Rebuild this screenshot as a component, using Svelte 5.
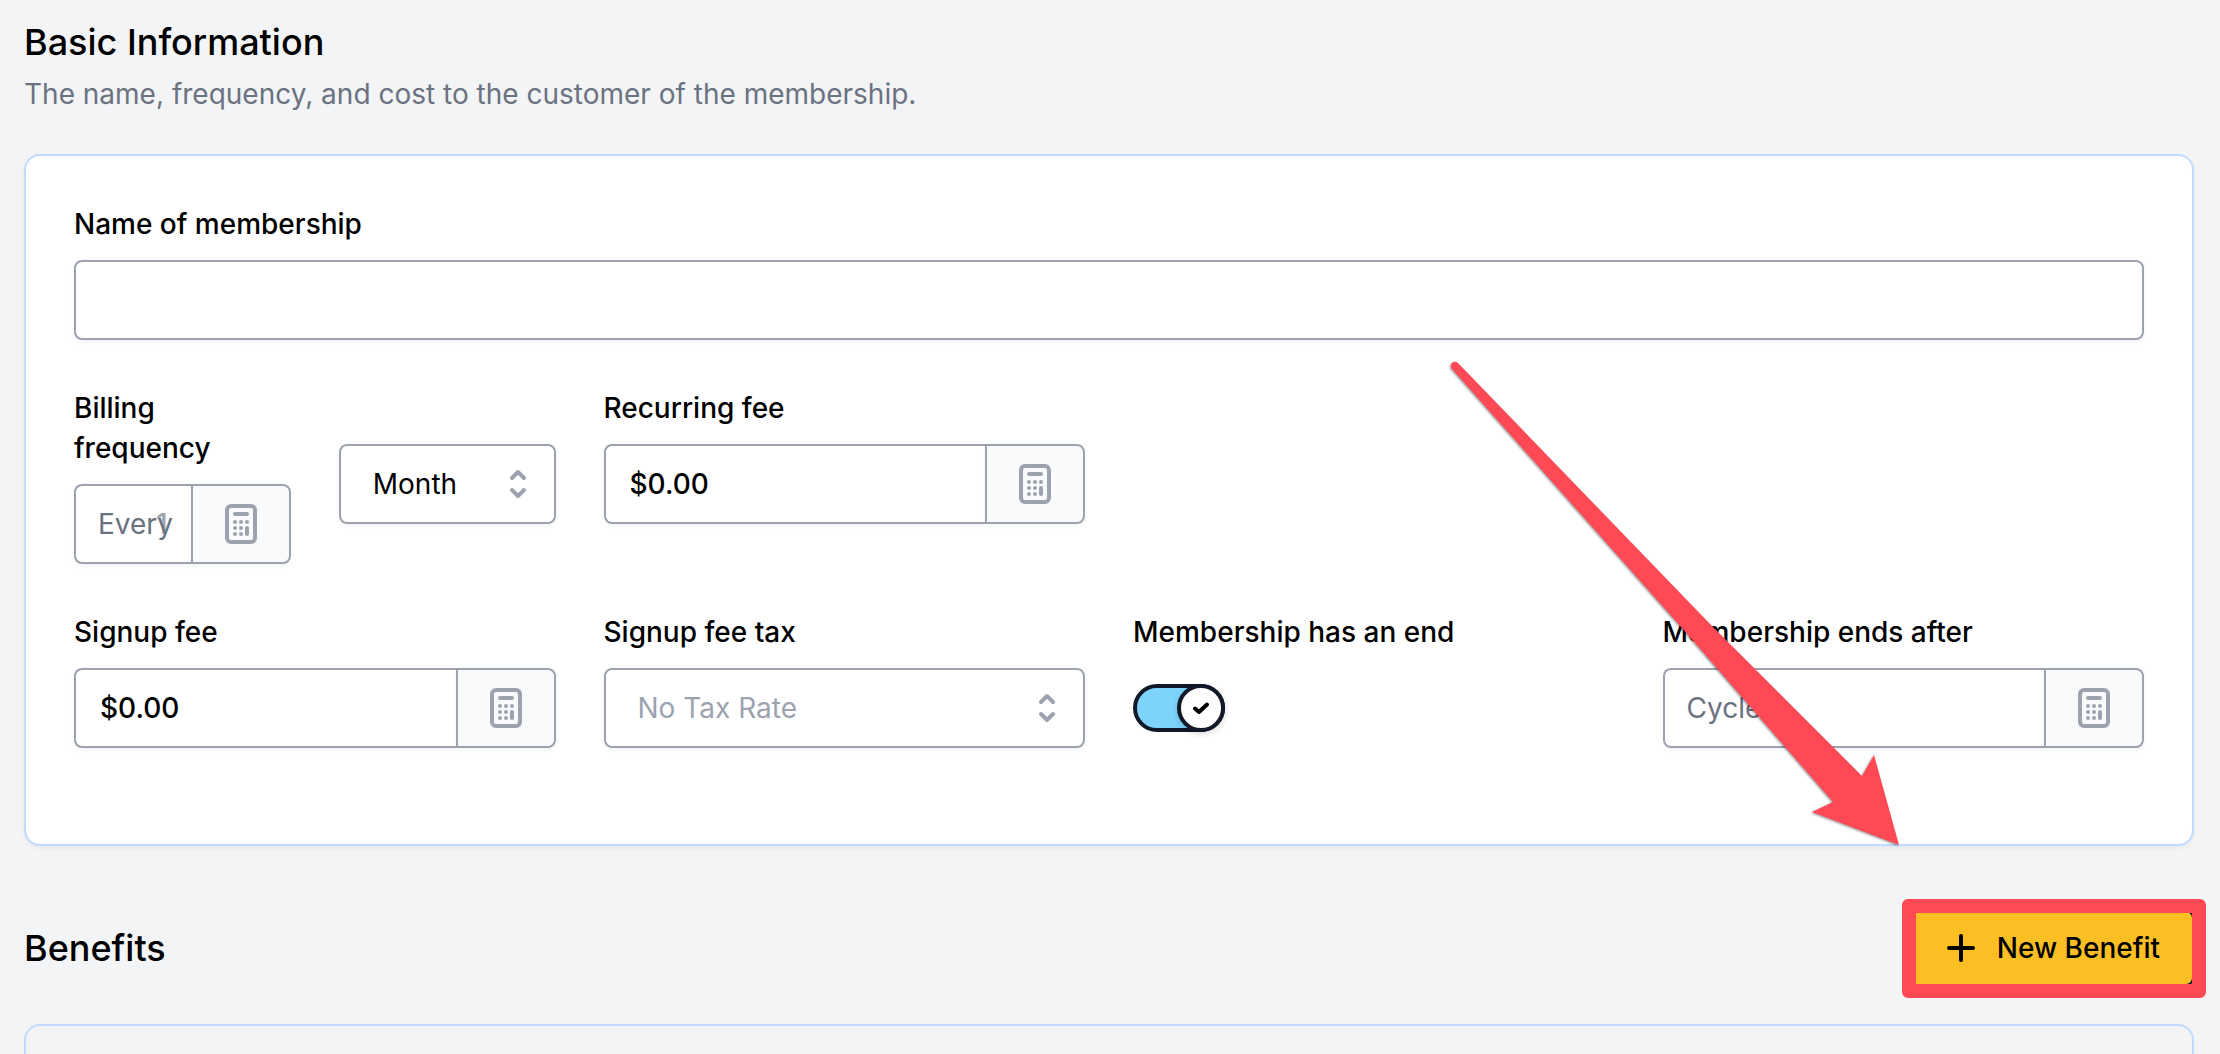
<script lang="ts">
	let name = $state('');
	let every = $state('1');
	let period = $state('Month');
	let recurringFee = $state('$0.00');
	let signupFee = $state('$0.00');
	let taxRate = $state('');
	let hasEnd = $state(true);
	let cycles = $state('');
</script>

{#snippet calculator(label: string)}
	<button class="addon" type="button" aria-label={label}>
		<svg width="32" height="40" viewBox="0 0 32 40" fill="none">
			<rect x="2" y="2" width="28" height="36" rx="4" stroke="currentColor" stroke-width="4" />
			<path d="M10 10H22" stroke="currentColor" stroke-width="4" stroke-linecap="round" />
			<g fill="currentColor">
				{#each [18, 24, 30] as y}
					<circle cx="10" cy={y} r="2" />
					<circle cx="16" cy={y} r="2" />
				{/each}
				<circle cx="22" cy="18" r="2" />
				<rect x="20" y="22" width="4" height="10" rx="2" />
			</g>
		</svg>
	</button>
{/snippet}

{#snippet chevrons()}
	<svg class="select__icon" width="20" height="32" viewBox="0 0 20 32" fill="none" stroke="currentColor" stroke-width="4" stroke-linecap="round" stroke-linejoin="round">
		<path d="M4 10L10 4L16 10M4 22L10 28L16 22" />
	</svg>
{/snippet}

<main class="page">
	<header class="intro">
		<h2 class="title">Basic Information</h2>
		<p class="subtitle">The name, frequency, and cost to the customer of the membership.</p>
	</header>

	<form class="card" onsubmit={(e) => e.preventDefault()}>
		<div class="field field--full">
			<label for="name">Name of membership</label>
			<input id="name" class="input" type="text" bind:value={name} />
		</div>

		<div class="pair">
			<div class="field">
				<label for="every">Billing frequency</label>
				<div class="group">
					<span class="group__prefix">Every</span>
					<input id="every" class="input input--prefixed" type="text" bind:value={every} />
					{@render calculator('Calculate billing frequency')}
				</div>
			</div>
			<div class="field field--unlabelled">
				<div class="select">
					<select aria-label="Billing period" bind:value={period}>
						<option>Day</option>
						<option>Week</option>
						<option>Month</option>
						<option>Year</option>
					</select>
					{@render chevrons()}
				</div>
			</div>
		</div>

		<div class="field">
			<label for="recurring">Recurring fee</label>
			<div class="group">
				<input id="recurring" class="input" type="text" bind:value={recurringFee} />
				{@render calculator('Calculate recurring fee')}
			</div>
		</div>

		<div class="field field--first">
			<label for="signup">Signup fee</label>
			<div class="group">
				<input id="signup" class="input" type="text" bind:value={signupFee} />
				{@render calculator('Calculate signup fee')}
			</div>
		</div>

		<div class="field">
			<label for="tax">Signup fee tax</label>
			<div class="select" class:select--empty={!taxRate}>
				<select id="tax" bind:value={taxRate}>
					<option value="">No Tax Rate</option>
				</select>
				{@render chevrons()}
			</div>
		</div>

		<div class="field">
			<label for="has-end">Membership has an end</label>
			<div class="switch">
				<input id="has-end" type="checkbox" role="switch" bind:checked={hasEnd} />
				<span class="switch__knob">
					<svg width="16" height="12" viewBox="0 0 16 12" fill="none" stroke="currentColor" stroke-width="4" stroke-linecap="round" stroke-linejoin="round">
						<path d="M2 6.5L6 10L14 2.5" />
					</svg>
				</span>
			</div>
		</div>

		<div class="field">
			<label for="cycles">Membership ends after</label>
			<div class="group">
				<input id="cycles" class="input input--cycles" type="text" placeholder="Cycles" bind:value={cycles} />
				{@render calculator('Calculate number of cycles')}
			</div>
		</div>

		<svg class="arrow" width="460" height="494" viewBox="0 0 460 494" fill="#ff4a56">
			<path d="M8 7Q5 4.500 2 7Q-0.500 10.500 2 13L232 272L383 446L362 456L449 489L424 399L412 420L262 270Z" />
		</svg>
	</form>

	<section>
		<div class="bar">
			<h2 class="title">Benefits</h2>
			<div class="callout">
				<button class="new" type="button">
					<svg width="28" height="32" viewBox="0 0 28 32" fill="none" stroke="currentColor" stroke-width="4" stroke-linecap="round">
						<path d="M14 4V28M2 16H26" />
					</svg>
					New Benefit
				</button>
			</div>
		</div>
		<div class="panel"></div>
	</section>
</main>

<style>
	:global(body) {
		background: #f3f4f6;
	}

	.page,
	.page * {
		box-sizing: border-box;
	}

	.page {
		padding: 18px 26px 0 24px;
		font: 400 28px/40px Inter, sans-serif;
		color: #000;
	}

	.title {
		margin: 0;
		font-size: 36px;
		line-height: 48px;
		font-weight: 500;
	}

	.subtitle {
		margin: 8px 0 0;
		color: #6b7280;
	}

	.card {
		position: relative;
		display: grid;
		grid-template-columns: repeat(4, minmax(0, 1fr));
		gap: 48px;
		margin-top: 40px;
		padding: 48px 48px 96px;
		background: #fff;
		border: 2px solid #bfdbfe;
		border-radius: 16px;
		box-shadow: 0 2px 4px rgba(0, 0, 0, 0.05);
	}

	.field {
		display: flex;
		flex-direction: column;
		gap: 16px;
		min-width: 0;
	}

	.field--full {
		grid-column: 1 / -1;
	}

	.field--first {
		grid-column: 1;
	}

	.field--unlabelled {
		padding-top: 56px;
	}

	.pair {
		display: grid;
		grid-template-columns: 1fr 1fr;
		gap: 48px;
	}

	label {
		font-weight: 500;
	}

	.input {
		width: 100%;
		min-width: 0;
		height: 80px;
		padding: 0 24px;
		font: inherit;
		font-weight: 500;
		color: #000;
		background: #fff;
		border: 2px solid #9ca3af;
		border-radius: 8px;
		box-shadow: 0 2px 4px rgba(0, 0, 0, 0.05);
	}

	.input::placeholder {
		font-weight: 400;
		color: #6b7280;
		opacity: 1;
	}

	.input--cycles {
		padding-left: 22px;
	}

	.group {
		position: relative;
		display: flex;
	}

	.group .input {
		flex: 1;
		border-right: 0;
		border-radius: 8px 0 0 8px;
	}

	.group__prefix {
		position: absolute;
		left: 24px;
		top: 20px;
		color: #6b7280;
		pointer-events: none;
	}

	.group .input--prefixed {
		padding: 0 24px 0 80px;
		color: #9ca3af;
	}

	.addon {
		display: flex;
		align-items: center;
		justify-content: center;
		flex: none;
		width: 100px;
		height: 80px;
		padding: 0;
		color: #9ca3af;
		background: #f9fafb;
		border: 2px solid #9ca3af;
		border-radius: 0 8px 8px 0;
		box-shadow: 0 2px 4px rgba(0, 0, 0, 0.05);
	}

	.select {
		position: relative;
	}

	.select select {
		display: block;
		width: 100%;
		height: 80px;
		padding: 0 64px 0 32px;
		appearance: none;
		font: inherit;
		color: #000;
		background: #fff;
		border: 2px solid #9ca3af;
		border-radius: 8px;
		box-shadow: 0 2px 4px rgba(0, 0, 0, 0.05);
	}

	.select--empty select {
		color: #9ca3af;
	}

	.select__icon {
		position: absolute;
		right: 28px;
		top: 24px;
		color: #9ca3af;
		pointer-events: none;
	}

	.switch {
		position: relative;
		width: 92px;
		height: 48px;
		margin-top: 16px;
	}

	.switch input {
		display: block;
		width: 100%;
		height: 100%;
		margin: 0;
		appearance: none;
		background: #e5e7eb;
		border: 4px solid #111827;
		border-radius: 24px;
	}

	.switch input:checked {
		background: #7dd3fc;
	}

	.switch__knob {
		position: absolute;
		left: 0;
		top: 0;
		display: flex;
		align-items: center;
		justify-content: center;
		width: 48px;
		height: 48px;
		background: #fff;
		border: 4px solid #111827;
		border-radius: 50%;
		box-shadow: 0 2px 6px rgba(0, 0, 0, 0.15);
		pointer-events: none;
	}

	.switch input:checked + .switch__knob {
		left: auto;
		right: 0;
	}

	.arrow {
		position: absolute;
		right: 282px;
		bottom: -6px;
		filter: drop-shadow(-1px 1px 1px rgba(0, 0, 0, 0.4));
		pointer-events: none;
	}

	.bar {
		display: flex;
		align-items: center;
		justify-content: space-between;
		margin-top: 64px;
	}

	.callout {
		position: relative;
	}

	.callout::after {
		content: '';
		position: absolute;
		inset: -11px -12px -12px -7px;
		border: 14px solid #ff4a56;
		border-radius: 6px;
		pointer-events: none;
	}

	.new {
		display: flex;
		align-items: center;
		gap: 22px;
		height: 76px;
		padding: 0 32px 0 36px;
		font: inherit;
		font-weight: 500;
		color: #000;
		background: #fbbf24;
		border: 2px solid #111827;
		border-radius: 8px;
	}

	.panel {
		height: 30px;
		margin-top: 38px;
		border: 2px solid #bfdbfe;
		border-bottom: 0;
		border-radius: 16px 16px 0 0;
	}
</style>
